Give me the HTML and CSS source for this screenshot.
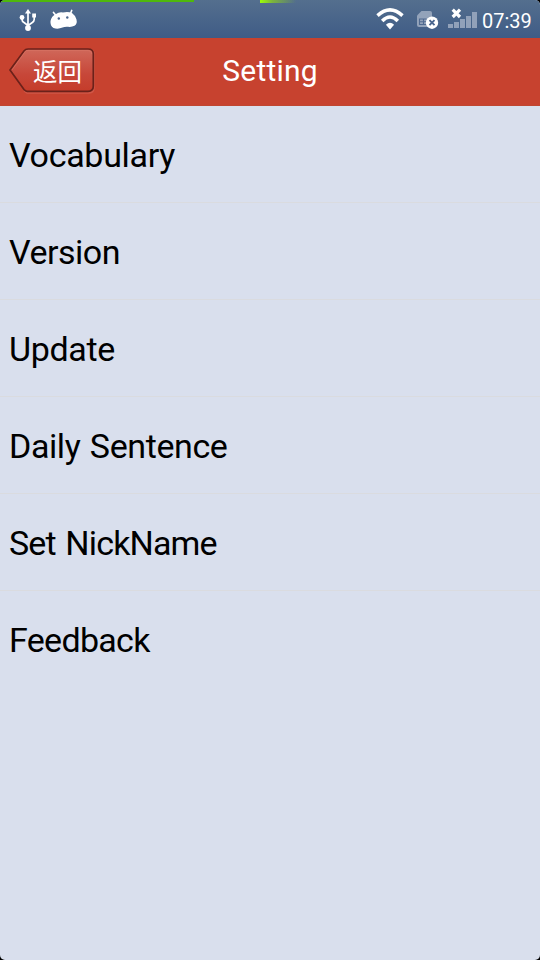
FILE: index.html
```html
<!DOCTYPE html>
<html lang="en">
<head>
<meta charset="utf-8">
<title>Setting</title>
<link rel="stylesheet" href="styles.css">
</head>
<body>
<div class="screen">
  <div class="status">
    <div class="progress"></div>
    <div class="spark"></div>
    <div class="status-left">
      <svg class="usb" width="18" height="24" viewBox="0 0 18 24" fill="none" stroke="#fff" stroke-width="1.7">
        <path d="M9 4V19M3 10V11.500Q3 13.500 5 14.500L9 17.500M15.200 8V11.500Q15.200 13.500 13 14.700L9 17.500"/>
        <path d="M9 1L12 5.500H6Z" fill="#fff" stroke="none"/>
        <circle cx="9" cy="20" r="2.900" fill="#fff" stroke="none"/>
        <circle cx="3" cy="9.500" r="2.400" fill="#fff" stroke="none"/>
        <path d="M13.200 5.500H17V9.500H13.200Z" fill="#fff" stroke="none"/>
      </svg>
      <svg class="droid" width="28" height="21" viewBox="0 0 28 21">
        <path d="M3.500 3.500L6 6.500M21.700 1.500L20.500 4.500" stroke="#fff" stroke-width="1.700" stroke-linecap="round"/>
        <path d="M6 5Q9 2.800 13 3.500Q18 2.300 22 4Q25.500 6.500 26.500 10.500Q27.500 15 24.500 16.800Q21.500 18.300 18 17.800Q14.500 17.600 12.500 18.500Q8 20.500 3.500 19Q0 17 .5 12Q1.500 7 6 5Z" fill="#fff"/>
        <circle cx="8.800" cy="9.500" r="1.200" fill="#4a658d"/>
        <circle cx="17.300" cy="8.500" r="1.200" fill="#4a658d"/>
      </svg>
    </div>
    <div class="status-right">
      <svg class="wifi" width="28" height="24" viewBox="0 0 28 24" fill="none" stroke="#fff" stroke-width="3.500">
        <path d="M1.500 8.600Q14-2.800 26.500 8.600M6.200 14Q14 6.200 21.800 14"/>
        <path d="M14 22.500L9.900 17.800Q14 13.800 18.100 17.800Z" fill="#fff" stroke="none"/>
      </svg>
      <svg class="sim" width="22" height="20" viewBox="0 0 22 20">
        <path d="M4.500 1H13Q15 1 15 3V15.500Q15 17 13.500 17H2Q0 17 0 15V5.500Z" fill="#93a3ba"/>
        <path d="M2.500 9H12V14.500H2.500ZM2.500 11.700H12M6.500 9V14.500" fill="none" stroke="#506a90" stroke-width="1.100"/>
        <circle cx="15" cy="12.700" r="6.200" fill="#fff"/>
        <path d="M12.500 10.200L17.500 15.200M17.500 10.200L12.500 15.200" stroke="#47638c" stroke-width="1.900"/>
      </svg>
      <svg class="signal" width="30" height="21" viewBox="0 0 30 21">
        <path d="M0 16H5V20H0ZM6 14H11V20H6ZM12 11H17V20H12ZM18 8H23V20H18ZM24 4H29V20H24Z" fill="#91a1b9"/>
        <path d="M4.700 1.700L12 9M12 1.700L4.700 9" stroke="#fff" stroke-width="3.200"/>
      </svg>
      <span class="clock">07:39</span>
    </div>
  </div>
  <header class="header">
    <div class="back">
      <svg class="back-shape" width="88" height="48" viewBox="0 0 88 48">
        <defs>
          <linearGradient id="g" x1="0" y1="0" x2="0" y2="1">
            <stop offset="0" stop-color="#d0685a"/>
            <stop offset=".6" stop-color="#c74739"/>
            <stop offset="1" stop-color="#c53c2a"/>
          </linearGradient>
        </defs>
        <path d="M19 3.500H81Q86 3.500 86 8.500V41.500Q86 47 81 47H19L16 45" fill="none" stroke="#cf5747" stroke-width="1.500"/>
        <path d="M20 3H80Q85.300 3 85.300 8V40Q85.300 45.300 80 45.300H19Q17.500 45.300 16 43.500L2 24L16 5Q17.500 3 20 3Z" fill="url(#g)" stroke="#6b211a" stroke-width="1.700"/>
        <path d="M4 24L18 4.500H80Q83.800 4.500 83.800 8" fill="none" stroke="#d87466" stroke-opacity=".6"/>
      </svg>
      <span class="back-label">返回</span>
    </div>
    <h1 class="title">Setting</h1>
  </header>
  <ul class="list">
    <li class="row"><span class="t1">Vocabulary</span></li>
    <li class="row"><span class="t2">Version</span></li>
    <li class="row"><span class="t3">Update</span></li>
    <li class="row"><span class="t4">Daily Sentence</span></li>
    <li class="row"><span class="t5">Set NickName</span></li>
    <li class="row"><span class="t6">Feedback</span></li>
  </ul>
</div>
</body>
</html>
```
FILE: styles.css
```css
* { box-sizing: border-box; margin: 0; padding: 0; }
body { background: #000; font-family: Roboto, "Noto Sans CJK SC", sans-serif; }
svg { display: block; flex: none; }
.screen { width: 540px; height: 960px; background: #d9dfed; border-radius: 5px; overflow: hidden; }
.status {
  position: relative; height: 38px; display: flex; justify-content: space-between;
  background: linear-gradient(#546f8e, #3f5c86);
}
.progress { position: absolute; left: 0; top: 0; width: 194px; height: 2px; background: #4fb80c; }
.spark { position: absolute; left: 260px; top: 0; width: 36px; height: 3px; background: linear-gradient(90deg, #9cff08, #7cb43c 35%, rgba(84,111,142,0)); }
.status-left { display: flex; padding-left: 19px; }
.usb { margin-top: 8px; }
.droid { margin: 9px 0 0 13px; }
.status-right { display: flex; padding-right: 9px; }
.wifi { margin-top: 7px; margin-right: .5px; }
.sim { margin: 10px 0 0 13px; }
.signal { margin: 8px 0 0 9px; }
.clock { width: 49px; margin-left: 4px; line-height: 42px; font-size: 20px; color: #fff; white-space: nowrap; }
.header { position: relative; height: 68px; background: #c7422f; display: flex; justify-content: center; border-bottom: 1px solid #c04631; }
.back { position: absolute; left: 8px; top: 8px; }
.back-label { position: absolute; left: 25px; top: 0; line-height: 50px; font-size: 24.5px; color: #fff; white-space: nowrap; font-family: "Noto Sans CJK SC", sans-serif; }
.title { font-weight: 400; font-size: 30px; line-height: 66px; color: #fff; letter-spacing: .2px; }
.list { list-style: none; }
.row { height: 97px; border-bottom: 1px solid #dadbdf; padding-left: 9px; font-size: 34px; line-height: 98px; color: #000; }
.row:last-child { border-bottom: 0; }
.t1 { letter-spacing: -.3px; }
.t2 { letter-spacing: -.5px; }
.t3 { letter-spacing: -.35px; }
.t4 { letter-spacing: -.4px; word-spacing: 1.4px; }
.t5 { letter-spacing: -.85px; word-spacing: 2px; }
.t6 { letter-spacing: -.7px; }
```
